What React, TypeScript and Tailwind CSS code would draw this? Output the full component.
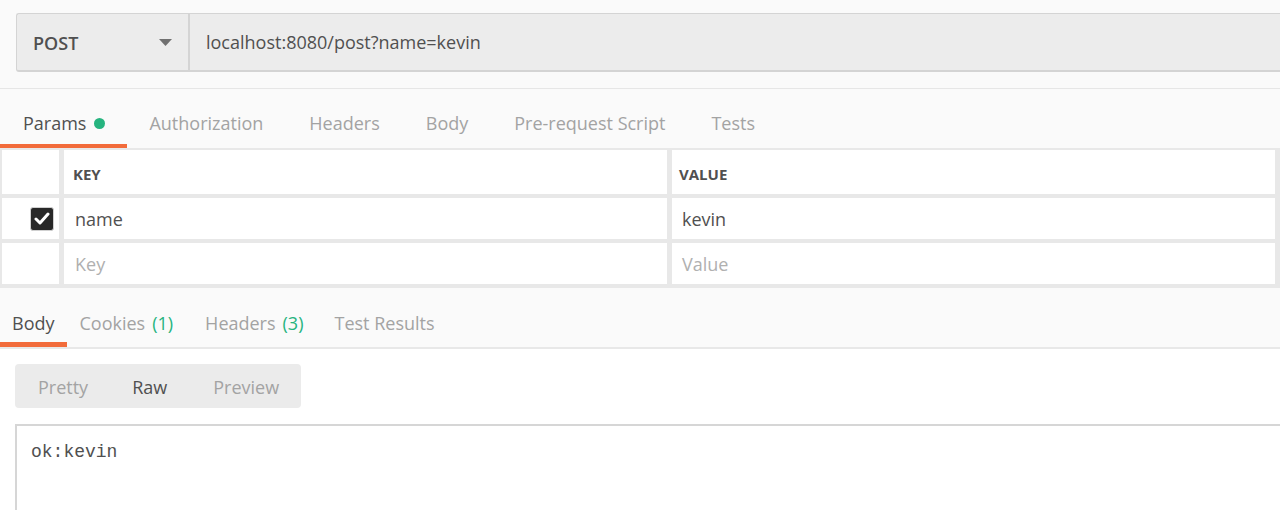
import React from "react";

const font = { fontFamily: '"Open Sans", "Noto Sans", sans-serif' };

const requestTabs = ["Authorization", "Headers", "Body", "Pre-request Script", "Tests"];

const App = () => {
  return (
    <div className="w-[1280px] h-[510px] overflow-hidden bg-white text-[#505050]" style={font}>
      {/* url bar */}
      <div className="bg-[#fafafa] pt-[13px] pl-[16px] h-[89px] border-b border-[#e6e6e6]">
        <div className="flex h-[59px] bg-[#ececec] border-t border-l border-b-2 border-[#d4d4d4] rounded-l-[3px]">
          <div className="w-[173px] flex items-center justify-between pl-[16px] pr-[16px] pt-[2px] border-r-2 border-[#d4d4d4]">
            <span className="text-[18px] font-semibold text-[#505050]">POST</span>
            <svg width="13" height="8" viewBox="0 0 13 8">
              <path d="M0 0 L13 0 L6.5 7 Z" fill="#707070" />
            </svg>
          </div>
          <div className="flex items-center pl-[16px] pt-[1px] text-[18px] text-[#505050]">localhost:8080/post?name=kevin</div>
        </div>
      </div>

      {/* request tabs */}
      <div className="bg-[#fafafa] h-[61px] flex items-end border-b-2 border-[#e8e8e8]">
        <div className="h-[59px] flex items-center pl-[23px] pr-[22px] border-b-4 border-[#f26b3a] pt-[13px]">
          <span className="text-[18px] text-[#505050]">Params</span>
          <span className="ml-[8px] w-[11px] h-[11px] rounded-full bg-[#26b47f]" />
        </div>
        {requestTabs.map((t, i) => (
          <div
            key={t}
            className={
              i === 0
                ? "h-[59px] flex items-center pl-[22px] pr-[23px] pt-[13px] border-b-4 border-transparent"
                : "h-[59px] flex items-center px-[23px] pt-[13px] border-b-4 border-transparent"
            }
          >
            <span className="text-[18px] text-[#a3a3a3]">{t}</span>
          </div>
        ))}
      </div>

      {/* params table */}
      <div className="grid grid-cols-[57px_1fr_1fr] gap-x-[5px] gap-y-[4px] bg-[#e8e8e8] pl-[2px] pr-[5px] pb-[4px]">
        <div className="h-[44px] bg-white" />
        <div className="h-[44px] bg-white flex items-center pl-[9px] pt-[4px] text-[15px] font-bold text-[#505050]">KEY</div>
        <div className="h-[44px] bg-white flex items-center pl-[7px] pt-[4px] text-[15px] font-bold text-[#505050]">VALUE</div>

        <div className="h-[41px] bg-white flex items-center justify-end pr-[5px]">
          <div className="w-[24px] h-[24px] rounded-[3px] bg-[#282828] border border-[#d0d0d0] flex items-center justify-center">
            <svg width="16" height="13" viewBox="0 0 16 13">
              <path d="M2 7 L6 11 L14 2" fill="none" stroke="white" strokeWidth="3" strokeLinecap="round" strokeLinejoin="round" />
            </svg>
          </div>
        </div>
        <div className="h-[41px] bg-white flex items-center pl-[11px] pt-[2px] text-[18px] text-[#505050]">name</div>
        <div className="h-[41px] bg-white flex items-center pl-[10px] pt-[2px] text-[18px] text-[#505050]">kevin</div>

        <div className="h-[41px] bg-white" />
        <div className="h-[41px] bg-white flex items-center pl-[11px] pt-[2px] text-[18px] text-[#b0b0b0]">Key</div>
        <div className="h-[41px] bg-white flex items-center pl-[10px] pt-[2px] text-[18px] text-[#b0b0b0]">Value</div>
      </div>

      {/* response tabs */}
      <div className="bg-[#fafafa] h-[61px] flex items-end border-b-2 border-[#e8e8e8] text-[18px]">
        <div className="h-[53px] flex items-center px-[12px] border-b-[5px] border-[#f26b3a] pt-[10px]">
          <span className="text-[#505050]">Body</span>
        </div>
        <div className="h-[53px] flex items-center pl-[13px] pr-[14px] pt-[10px] border-b-[5px] border-transparent text-[#a3a3a3]">
          Cookies<span className="ml-[7px] text-[#26b47f]">(1)</span>
        </div>
        <div className="h-[53px] flex items-center pl-[18px] pr-[16px] pt-[10px] border-b-[5px] border-transparent text-[#a3a3a3]">
          Headers<span className="ml-[7px] text-[#26b47f]">(3)</span>
        </div>
        <div className="h-[53px] flex items-center pl-[15px] pt-[10px] border-b-[5px] border-transparent text-[#a3a3a3]">
          Test Results
        </div>
      </div>

      {/* response body */}
      <div className="bg-white pl-[15px] pt-[15px]">
        <div className="inline-flex h-[44px] rounded-[4px] bg-[#ebebeb] text-[18px]">
          <div className="flex items-center pl-[23px] pr-[22px] pt-[3px] text-[#a3a3a3]">Pretty</div>
          <div className="flex items-center pl-[22px] pr-[24px] pt-[3px] text-[#505050]">Raw</div>
          <div className="flex items-center pl-[22px] pr-[22px] pt-[3px] text-[#a3a3a3]">Preview</div>
        </div>
        <div className="mt-[16px] h-[120px] border-t-2 border-l-2 border-[#d6d6d6] pl-[14px] pt-[13px]">
          <span className="text-[18px] text-[#505050]" style={{ fontFamily: '"Liberation Mono", monospace' }}>
            ok:kevin
          </span>
        </div>
      </div>
    </div>
  );
};

export default App;
